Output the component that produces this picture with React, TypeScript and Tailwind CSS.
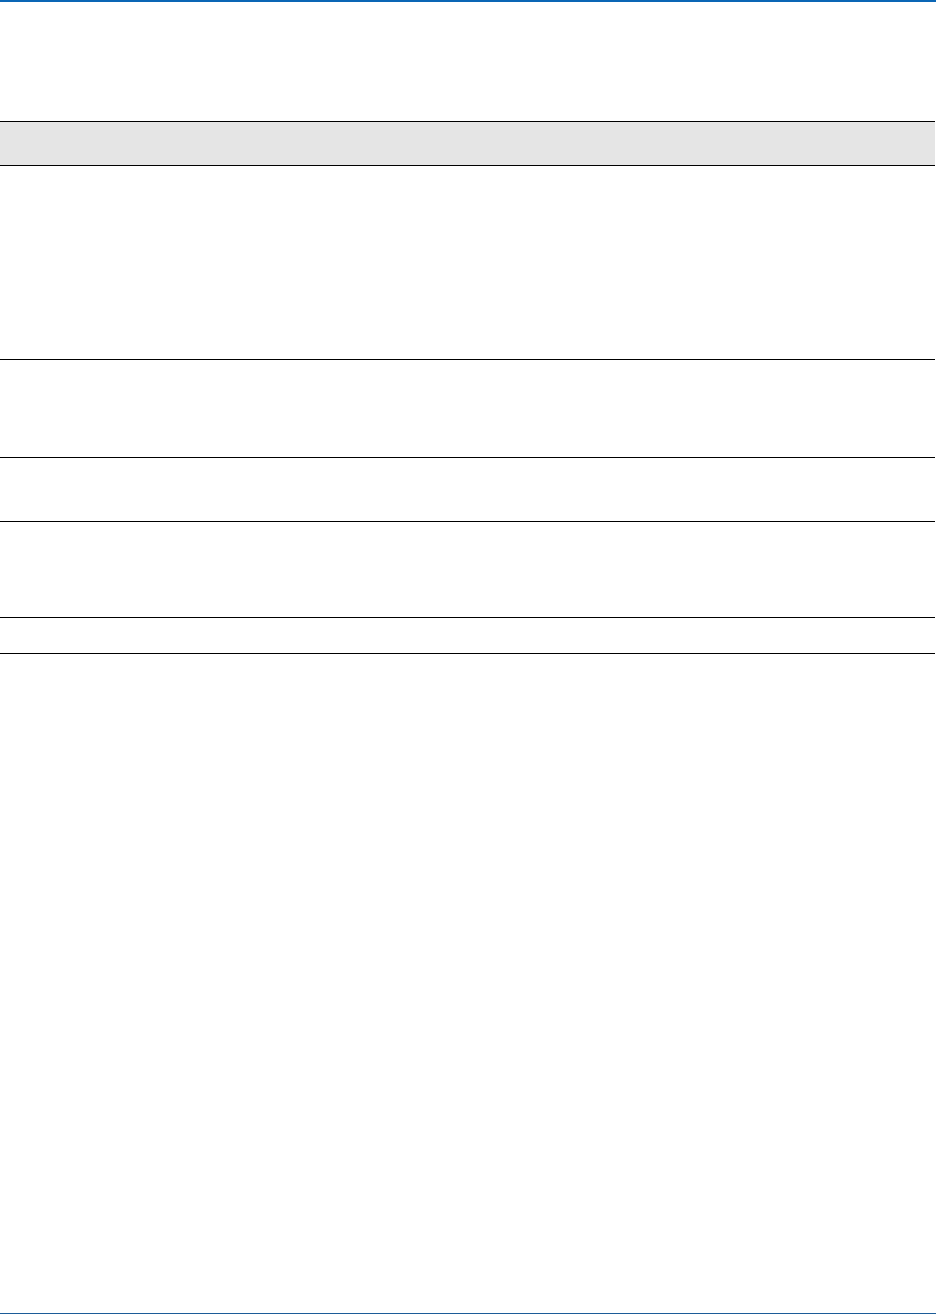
export default function App() {
  const rows = [194, 98, 64, 96, 36];
  return (
    <div className="relative w-[936px] h-[1314px] bg-white flex flex-col" style={{ fontFamily: '"Liberation Sans", Arial, sans-serif' }}>
      <div className="h-[2px] w-full bg-[#0a66b5]" />
      <div className="h-[119px]" />
      <div className="w-[935px] border-t border-black">
        <div className="h-[44px] bg-[#e5e5e5] border-b border-black" />
        {rows.map((h, i) => (
          <div key={i} className="border-b border-black" style={{ height: h }} />
        ))}
      </div>
      <div className="flex-1" />
      <div className="h-[1px] w-full bg-[#1c5c98]" />
    </div>
  );
}
